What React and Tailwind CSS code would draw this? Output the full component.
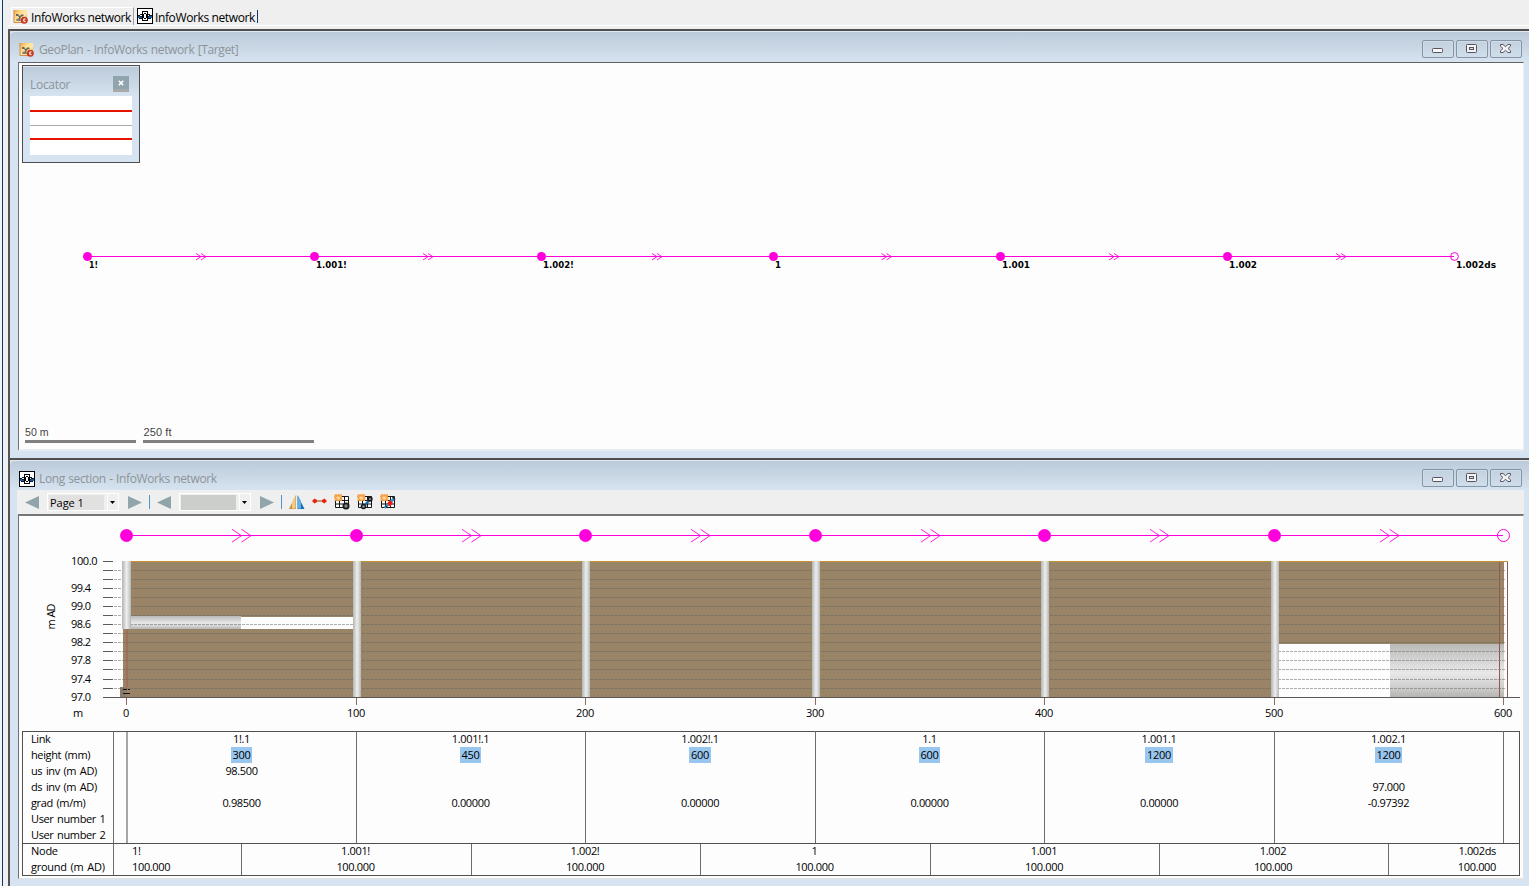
import React from "react";

const MAGENTA = "#ff00dc";

function MapIcon() {
  return (
    <svg width="16" height="16" viewBox="0 0 16 16" className="shrink-0">
      <defs>
        <linearGradient id="mapfill" x1="0" y1="0" x2="1" y2="0.8">
          <stop offset="0" stopColor="#f0a548" />
          <stop offset="0.4" stopColor="#ffdf8e" />
          <stop offset="0.7" stopColor="#ffe9a6" />
          <stop offset="1" stopColor="#ee9a3a" />
        </linearGradient>
      </defs>
      <path d="M1 1h13v12.500H1z" fill="url(#mapfill)" />
      <path d="M1 1v12.500H9" fill="none" stroke="#cd8d50" />
      <path d="M3 5h2.500v1.300l1.500 0.700 1-1.500h2.500v1.700H9L7.500 8.500V12H3.500v-2.200h2l0.700-1.300L5 7H3z" fill="#6b645c" />
      <path d="M4 10.500h2.500v1H4z" fill="#a49d92" />
      <circle cx="11.300" cy="11.300" r="3.500" fill="#c63a22" />
      <path d="M12.500 9.200Q9.900 9 10 11.200t2.500 2v-1.100h-1v-1.700h1z" fill="#ffe9e0" />
    </svg>
  );
}

function SectionIcon() {
  return (
    <svg width="16" height="16" viewBox="0 0 16 16" shapeRendering="crispEdges" className="shrink-0">
      <rect x="0.5" y="0.5" width="15" height="15" fill="#fff" stroke="#000" />
      <path d="M1 8h2v1h3v1h-5zM10 9h2v-1h3v2h-5z" fill="#1b5a95" />
      <path d="M1 7h2v1h-2zM3 8h2v1h-2zM11 8h1v1h-1zM12 7h3v1h-3zM3 6h2v1h-2zM11 6h2v1h-2zM2 10h3v1h-3zM11 10h3v1h-3z" fill="#0a1a2c" />
      <path d="M5 3h6v10h-6z" fill="#000" />
      <path d="M6 4h4v8h-4z" fill="#fff" />
      <path d="M7 5h2v1h-2zM6 6h1v4h-1zM9 6h1v4h-1zM7 10h2v1h-2z" fill="#000" />
    </svg>
  );
}

function WindowButton({ kind }) {
  return (
    <span className="flex h-[18px] w-8 items-center justify-center rounded-[2px] border border-[#8496a4] bg-gradient-to-b from-[#c3d1de] to-[#d0deeb] shadow-[inset_0_0_0_1px_#d0dde9]">
      <svg width="12" height="10" viewBox="1 0 12 10" className="mr-px overflow-visible">
        {kind === "min" && (
          <rect x="1.5" y="4.5" width="10" height="4" rx="0.8" fill="#f8f8f8" stroke="#575260" />
        )}
        {kind === "max" && (
          <g fill="none" stroke="#575260">
            <rect x="1.5" y="0.5" width="10" height="8" rx="0.8" fill="#f4f4f4" />
            <rect x="4.5" y="3.5" width="4" height="2" fill="#d5e0ea" />
          </g>
        )}
        {kind === "close" && (
          <path
            d="M1.500 0.500h2.500l2.500 2.200 2.500-2.200h2.500v1.700L9 4.500l2.500 2.300v1.700h-2.500l-2.500-2.200-2.500 2.200H1.500V6.800L4 4.500 1.500 2.200z"
            fill="#f6f6f6"
            stroke="#575260"
          />
        )}
      </svg>
    </span>
  );
}

function TitleBar({ icon, title, className }) {
  return (
    <div className={"flex shrink-0 items-start justify-between rounded-tl-[5px] border-t border-[#dfe7ef] bg-gradient-to-b from-[#bccbda] to-[#d6e3f0] pl-[9px] pr-[7px] " + className}>
      <div className="flex items-center gap-1 pt-[9px]">
        {icon}
        <span className="whitespace-pre pt-px text-[12px] leading-4 tracking-[-0.38px] text-[#8d9499] [word-spacing:0.7px]">{title}</span>
      </div>
      <div className="flex gap-[2px] pt-2">
        <WindowButton kind="min" />
        <WindowButton kind="max" />
        <WindowButton kind="close" />
      </div>
    </div>
  );
}

const planNodes = [
  [87.5, "1!", 9],
  [314.5, "1.001!", 31],
  [541.5, "1.002!", 31],
  [773.5, "1", 6],
  [1000.5, "1.001", 28],
  [1227.5, "1.002", 28],
  [1454.5, "1.002ds", 40],
];
const planArrows = [201, 428, 657, 886.5, 1114, 1341];

function PlanDrawing() {
  return (
    <svg width="1504" height="386" viewBox="19 63 1504 386" className="block">
      <path d="M88 256.500H1454" stroke={MAGENTA} strokeWidth="1.1" />
      {planArrows.map((x) => (
        <path
          key={x}
          d={`M${x - 5} 253.500l5 3.200-5 3.200M${x} 253.500l5 3.200-5 3.200`}
          fill="none"
          stroke={MAGENTA}
          strokeWidth="0.9"
        />
      ))}
      {planNodes.map(([x, label, w], i) => (
        <g key={label}>
          <circle cx={x} cy="256.5" r={i === 6 ? 3.9 : 4.5} fill={i === 6 ? "none" : MAGENTA} stroke={i === 6 ? MAGENTA : "none"} />
          <text
            x={x + 1.5}
            y="268"
            textLength={w}
            lengthAdjust="spacingAndGlyphs"
            className="fill-black font-['DejaVu_Sans',sans-serif] text-[9.5px] font-bold"
          >
            {label}
          </text>
        </g>
      ))}
      <g className="fill-[#444] font-['Liberation_Sans',sans-serif] text-[11px]">
        <text x="25" y="436" textLength="23.5" lengthAdjust="spacingAndGlyphs">50 m</text>
        <text x="143.500" y="436" textLength="28">250 ft</text>
      </g>
      <path d="M25 441.500H136M143 441.500H314" stroke="#808080" strokeWidth="3" />
    </svg>
  );
}

function Locator() {
  return (
    <div className="absolute left-[3px] top-[2px] h-[98px] w-[118px] border border-[#4d4d4f] bg-[#d6e3f0]">
      <div className="flex h-[30px] items-start justify-between border-t border-[#dfe7ef] bg-gradient-to-b from-[#bccbda] to-[#d6e3f0] pl-[7px] pr-[10px]">
        <span className="pt-[10px] text-[12px] leading-4 tracking-[-0.3px] text-[#8d9499]">Locator</span>
        <span className="mt-[9px] flex h-4 w-4 items-center justify-center border-b-[3px] border-[#a9a9a9] bg-[#90a4ad]">
          <svg width="6" height="6" viewBox="0 0 6 6" className="mt-px">
            <path d="M0.800 0.800L5.200 5.200M5.200 0.800L0.800 5.200" stroke="#fff" strokeWidth="1.6" />
          </svg>
        </span>
      </div>
      <div className="ml-[7px] flex h-[59px] w-[102px] flex-col bg-white">
        <div className="h-[16px] border-b-2 border-[#e51400]" />
        <div className="h-[14px] border-b border-[#aaa]" />
        <div className="h-[14px] border-b-2 border-[#e51400]" />
      </div>
    </div>
  );
}

function Arrow({ left }) {
  return (
    <svg width="14" height="13" viewBox="0 0 14 13" className="shrink-0">
      <path d={left ? "M14 0V13L0 6.500z" : "M0 0V13L14 6.500z"} fill="#8fa5a9" />
    </svg>
  );
}

function Combo({ text, fill }) {
  return (
    <div className="flex h-[18px] w-[72px] shrink-0 items-center border border-white bg-[#eeefee]">
      <div className={"ml-[1px] h-[15px] w-[55px] pl-[1px] text-[11px] leading-[16px] tracking-[-0.05px] text-black " + fill}>{text}</div>
      <div className="ml-[3px] flex h-4 flex-1 items-center justify-center border-l border-white pr-[2px]">
        <svg width="5" height="3" viewBox="0 0 5 3">
          <path d="M0 0H5L2.500 3z" fill="#000" />
        </svg>
      </div>
    </div>
  );
}

function GridIcon({ kind }) {
  return (
    <svg width="16" height="16" viewBox="0 0 16 16" className="shrink-0">
      <path d="M1.500 2.500H14.500V13.500H1.500zM5.500 2V14M10.500 2V14M1 6.500H15M1 10H15" fill="#fff" stroke="#151515" strokeWidth="1" />
      <path d="M1 0l2 0.500L4.500 0 6 0.500 8 0v3l0.500 1.500L8 7 5.500 6.700 4 7.500 2.500 6.700 0.500 7.200 0.700 4.500 0 3z" fill="#f5a34a" />
      <rect x="2.5" y="2.5" width="3.500" height="3" rx="1" fill="#ffd594" />
      {kind === 0 && (
        <g>
          <circle cx="12" cy="12" r="3.500" fill="#1b1b1b" />
          <circle cx="12" cy="12" r="1.700" fill="#7d8c90" />
        </g>
      )}
      {kind === 1 && (
        <g>
          <path d="M7.500 11.500L12.500 6" stroke="#1c6ba5" strokeWidth="2.400" />
          <circle cx="6.500" cy="12.500" r="2.800" fill="#1b1b1b" />
          <circle cx="6.500" cy="12.500" r="1.200" fill="#8b999c" />
          <circle cx="13" cy="5" r="2.700" fill="#1b1b1b" />
          <circle cx="13" cy="5" r="1.100" fill="#8b999c" />
        </g>
      )}
      {kind === 2 && (
        <g>
          <path d="M4.500 14L14.500 4" stroke="#3f94c9" strokeWidth="2.600" />
          <path d="M10 6L13 9 10 12.500 7 9.500z" fill="#ee1c12" />
          <path d="M12.500 3l2.500 2.500M5.500 11.500l2 2.500" stroke="#1b1b1b" strokeWidth="1.100" />
        </g>
      )}
    </svg>
  );
}

function Toolbar() {
  return (
    <div className="mx-[7px] flex h-[24px] w-[1507px] shrink-0 items-center bg-[#eeefee] pl-2">
      <Arrow left />
      <div className="ml-2"><Combo text="Page 1" fill="bg-[#e1e1e1]" /></div>
      <div className="ml-[9px] flex"><Arrow /></div>
      <div className="ml-[7px] h-[14px] w-px bg-[#4f94c8]" />
      <div className="ml-[7px] flex"><Arrow left /></div>
      <div className="ml-2"><Combo text="" fill="bg-[#cccecc]" /></div>
      <div className="ml-[9px] flex"><Arrow /></div>
      <div className="ml-[7px] h-[14px] w-px bg-[#4f94c8]" />
      <svg width="16" height="14" viewBox="0 0 16 14" className="ml-[7px]">
        <path d="M7 0V14H0z" fill="#c4923f" />
        <path d="M6.500 1V13.500H3V7z" fill="#efcb8c" />
        <path d="M8.500 0V14H15.500z" fill="#156fb4" />
        <path d="M9 1V13.500H12V6z" fill="#5fb0e4" />
      </svg>
      <svg width="15" height="6" viewBox="0 0 15 6" className="mb-[3px] ml-[7px]">
        <path d="M2 3H13" stroke="#a85a24" strokeWidth="1.2" />
        <path d="M0 3L2.500 0.500 5 2v2L2.500 5.500zM15 3L12.500 0.500 10 2v2l2.500 1.500z" fill="#e8240e" />
      </svg>
      <div className="ml-[7px] flex gap-[7px]">
        <GridIcon kind={0} />
        <GridIcon kind={1} />
        <GridIcon kind={2} />
      </div>
    </div>
  );
}

const stationX = [126.5, 356.5, 585.5, 815.5, 1044.5, 1274.5, 1503.5];
const stationLabels = ["0", "100", "200", "300", "400", "500", "600"];
const sectionArrows = [241.5, 471.5, 700.5, 930.5, 1159.5, 1389.5];
const levels = Array.from({ length: 16 }, (_, i) => Math.floor(561 + i * 9.08) + 0.5);
const levelLabels = { 0: "100.0", 3: "99.4", 5: "99.0", 7: "98.6", 9: "98.2", 11: "97.8", 13: "97.4", 15: "97.0" };

function SectionChart() {
  return (
    <svg width="1504" height="215" viewBox="19 516 1504 215" className="block">
      <defs>
        <linearGradient id="shaft">
          <stop offset="0" stopColor="#b5b5b3" />
          <stop offset="0.25" stopColor="#cfcfcd" />
          <stop offset="0.5" stopColor="#eeeeee" />
          <stop offset="0.75" stopColor="#d5d5d3" />
          <stop offset="1" stopColor="#b5b5b3" />
        </linearGradient>
        <linearGradient id="pipe" x2="0" y2="1">
          <stop offset="0" stopColor="#b9b9b7" />
          <stop offset="0.25" stopColor="#cfcfcf" />
          <stop offset="0.55" stopColor="#e9e9e9" />
          <stop offset="0.8" stopColor="#cfcfcf" />
          <stop offset="1" stopColor="#b5b6b3" />
        </linearGradient>
      </defs>
      <path d="M127 535.500H1503" stroke={MAGENTA} strokeWidth="1.1" />
      {sectionArrows.map((x) => (
        <path key={x} d={`M${x - 9.5} 529.300l9.500 6.400-9.500 6.400M${x} 529.300l9.500 6.400-9.500 6.400`} fill="none" stroke={MAGENTA} strokeWidth="0.9" />
      ))}
      {stationX.map((x, i) => (
        <circle key={x} cx={x} cy="535.5" r={i === 6 ? 6 : 6.5} fill={i === 6 ? "none" : MAGENTA} stroke={i === 6 ? MAGENTA : "none"} />
      ))}

      <g shapeRendering="crispEdges">
        <rect x="131" y="561" width="1373" height="136" fill="#998468" />
        <rect x="123" y="629" width="8" height="68" fill="#998468" />
        <rect x="120" y="687" width="6" height="10" fill="#8b7b69" />
        <rect x="131" y="561" width="1377" height="1" fill="#c8942c" />
        <rect x="126" y="629" width="2" height="58" fill="#a27058" />
        <rect x="130" y="616" width="111" height="13" fill="url(#pipe)" />
        <rect x="241" y="617" width="112" height="12" fill="#fdfdfd" />
        <rect x="1278" y="644" width="113" height="53" fill="#fdfdfd" />
        <rect x="1390" y="644" width="114" height="53" fill="url(#pipe)" />
        <rect x="1504" y="562" width="3" height="135" fill="#fdfdfd" />
        {levels.slice(1, 15).map((y) => (
          <path key={y} d={`M114 ${y}H1506`} stroke="#626262" strokeOpacity="0.5" strokeDasharray="3 1" />
        ))}
        <rect x="122" y="561" width="9" height="68" fill="url(#shaft)" />
        {stationX.slice(1, 6).map((x) => (
          <rect key={x} x={x - 3.5} y="561" width="8" height="136" fill="url(#shaft)" />
        ))}
        <path d="M1499.500 562V697M1507.500 562V697" stroke="#8f5a4c" />
        {levels.map((y) => (
          <path key={y} d={`M103 ${y}H113`} stroke="#5a5a5a" />
        ))}
        <path d="M103 697.500H1520" stroke="#5a5755" />
        {stationX.map((x) => (
          <path key={x} d={`M${x} 698V705`} stroke="#926b60" />
        ))}
        <path d="M123 689.500H127M128 689.500H130M123 693.500H130" stroke="#111" />
      </g>

      <g className="fill-black font-['Open_Sans',sans-serif] text-[11px]">
        {levels.map((y, i) =>
          levelLabels[i] ? (
            <text key={y} x="71" y={y + 3.5} textLength={i === 0 ? 26.5 : 20}>
              {levelLabels[i]}
            </text>
          ) : null
        )}
        <text x="73" y="717">m</text>
        <text transform="translate(54.500 629.500) rotate(-90)" textLength="26" className="[word-spacing:1px]">m AD</text>
        {stationX.map((x, i) => (
          <text key={x} x={x - 0.5} y="717" textAnchor="middle" className="tracking-[-0.35px]">
            {stationLabels[i]}
          </text>
        ))}
      </g>
    </svg>
  );
}

const rowLabels = ["Link", "height (mm)", "us inv (m AD)", "ds inv (m AD)", "grad (m/m)", "User number 1", "User number 2"];
const links = [
  ["1!.1", "300", "98.500", "", "0.98500"],
  ["1.001!.1", "450", "", "", "0.00000"],
  ["1.002!.1", "600", "", "", "0.00000"],
  ["1.1", "600", "", "", "0.00000"],
  ["1.001.1", "1200", "", "", "0.00000"],
  ["1.002.1", "1200", "", "97.000", "-0.97392"],
];
const nodes = ["1!", "1.001!", "1.002!", "1", "1.001", "1.002", "1.002ds"];

function DataTable() {
  return (
    <div className="ml-[3px] w-[1498px] border border-[#505050] text-[11px] leading-4 tracking-[-0.35px] text-black">
      <div className="grid h-[112px] grid-cols-[91px_14px_229px_229px_230px_229px_230px_229px_15px] border-b border-[#505050]">
        <div className="-mt-px border-r border-[#707070] pl-2 tracking-[-0.38px] [word-spacing:1.2px]">
          {rowLabels.map((l) => (
            <div key={l} className="h-4">{l}</div>
          ))}
        </div>
        <div className="border-r-2 border-[#a6a6a6]" />
        {links.map((cells, c) => (
          <div key={c} className="-mt-px border-r border-[#6c6c6c] pr-px">
            {cells.map((v, r) => (
              <div key={r} className="flex h-4 justify-center">
                {r === 1 ? <span className="h-4 bg-[#99c6ee] px-[2px]">{v}</span> : v}
              </div>
            ))}
          </div>
        ))}
        <div />
      </div>
      <div className="grid h-[31px] grid-cols-[91px_128px_230px_229px_230px_229px_229px_130px]">
        <div className="h-[31px] border-r border-[#707070] pl-2 tracking-[-0.26px] [word-spacing:1.2px]">
          <div className="-mt-px">Node</div>
          <div>ground (m AD)</div>
        </div>
        {nodes.map((n, i) => (
          <div
            key={n}
            className={
              i === 0
                ? "h-[31px] border-r border-[#6c6c6c] pl-[18px]"
                : i === 6
                  ? "h-[31px] pr-[23px] text-right"
                  : "h-[31px] border-r border-[#6c6c6c] pr-[2px] text-center"
            }
          >
            <div className="-mt-px">{n}</div>
            <div>100.000</div>
          </div>
        ))}
      </div>
    </div>
  );
}

export default function App() {
  return (
    <div className="flex h-[886px] w-[1529px] overflow-hidden bg-[#eeefee] font-['Open_Sans',sans-serif]">
      <div className="w-[3px] shrink-0 border-r border-[#0b3c70] bg-[#f3f4f4]" />
      <div className="flex w-[1526px] shrink-0 flex-col">
        <div className="flex h-[29px] shrink-0 flex-col pl-[5px]">
          <div className="flex h-[26px] items-end border-b border-white pl-[3px] text-[12px] leading-4 tracking-[-0.38px] text-black">
            <div className="flex h-[18px] w-[123px] items-center gap-[2px] border-l border-t border-r border-l-white border-r-[#a0a0a0] border-t-white pl-px">
              <MapIcon />
              <span className="whitespace-nowrap pt-[3px]">InfoWorks network</span>
            </div>
            <div className="ml-[3px] flex h-[18px] items-center gap-[2px]">
              <SectionIcon />
              <span className="whitespace-nowrap pt-[3px]">InfoWorks network</span>
              <span className="h-[13px] w-px bg-[#123a68]" />
            </div>
          </div>
        </div>

        <div className="ml-[5px] flex flex-1 flex-col border-l-2 border-[#555557]">
          <section className="flex h-[429px] shrink-0 flex-col border-t-2 border-[#4f4f52] bg-[#d6e3f0]">
            <TitleBar className="h-[31px]" icon={<MapIcon />} title="GeoPlan - InfoWorks network [Target]" />
            <div className="relative ml-2 h-[389px] w-[1506px] shrink-0 border border-b-2 border-b-[#e8edf2] border-l-[#707070] border-r-[#e8edf2] border-t-[#606060] bg-[#fdfdfd]">
              <PlanDrawing />
              <Locator />
            </div>
          </section>
          <section className="flex flex-1 flex-col border-t-2 border-[#4f4f52] bg-[#d6e3f0]">
            <TitleBar className="h-[30px]" icon={<SectionIcon />} title="Long section - InfoWorks network" />
            <Toolbar />
            <div className="ml-2 h-[365px] w-[1506px] shrink-0 border border-t-2 border-b-[#e3e3e3] border-l-[#707070] border-r-[#e3e3e3] border-t-[#777] bg-[#fdfdfd]">
              <SectionChart />
              <DataTable />
            </div>
          </section>
        </div>
      </div>
    </div>
  );
}
